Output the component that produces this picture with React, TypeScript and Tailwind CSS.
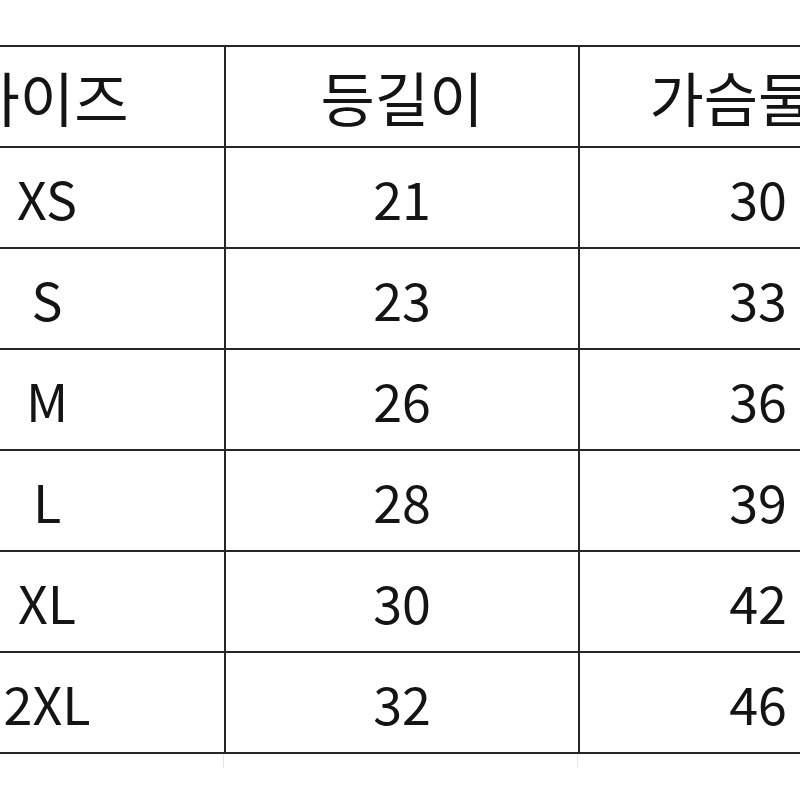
import React from "react";

type Row = { size: string; back: string; chest: string };

const rows: Row[] = [
  { size: "XS", back: "21", chest: "30" },
  { size: "S", back: "23", chest: "33" },
  { size: "M", back: "26", chest: "36" },
  { size: "L", back: "28", chest: "39" },
  { size: "XL", back: "30", chest: "42" },
  { size: "2XL", back: "32", chest: "46" },
];

function Cells({ a, b, c, head }: { a: string; b: string; c: string; head?: boolean }) {
  return (
    <div className={`flex h-[101px] border-b-2 border-[#262626] ${head ? "text-[59px]" : "text-[52px]"}`}>
      <div className="flex w-[356px] shrink-0 items-center justify-center border-r-2 border-[#262626]">{a}</div>
      <div className="flex w-[354px] shrink-0 items-center justify-center border-r-2 border-[#262626]">{b}</div>
      <div className="flex w-[356px] shrink-0 items-center justify-center">{c}</div>
    </div>
  );
}

export default function App() {
  return (
    <div className="relative h-[800px] w-[800px] overflow-hidden bg-white">
      <div
        className="ml-[-130px] mt-[45px] w-[1066px] border-t-2 border-[#262626] leading-none text-[#141414]"
        style={{ fontFamily: '"Noto Sans CJK KR", "Noto Sans", sans-serif' }}
      >
        <Cells head a="사이즈" b="등길이" c="가슴둘레" />
        {rows.map((r) => (
          <Cells key={r.size} a={r.size} b={r.back} c={r.chest} />
        ))}
        <div className="flex h-[14px]">
          <div className="w-[354px] shrink-0 border-r border-[#e4e4e4]" />
          <div className="w-[354px] shrink-0 border-r border-[#e4e4e4]" />
        </div>
      </div>
    </div>
  );
}
